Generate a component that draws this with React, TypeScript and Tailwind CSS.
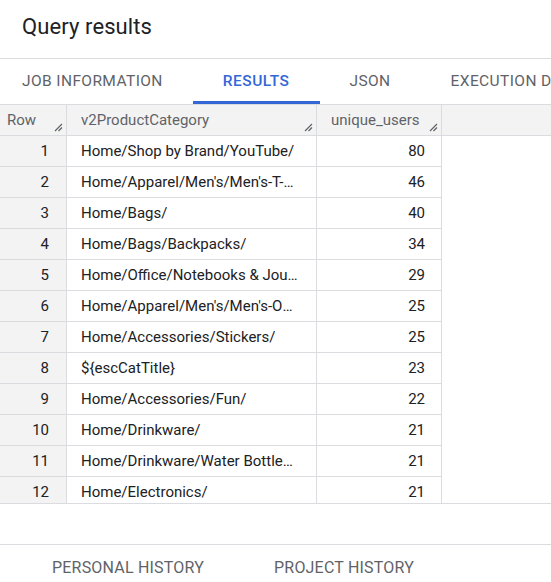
import React from "react";

const rows: [number, string, number][] = [
  [1, "Home/Shop by Brand/YouTube/", 80],
  [2, "Home/Apparel/Men's/Men's-T-Shirts/", 46],
  [3, "Home/Bags/", 40],
  [4, "Home/Bags/Backpacks/", 34],
  [5, "Home/Office/Notebooks & Journals/", 29],
  [6, "Home/Apparel/Men's/Men's-Outerwear/", 25],
  [7, "Home/Accessories/Stickers/", 25],
  [8, "${escCatTitle}", 23],
  [9, "Home/Accessories/Fun/", 22],
  [10, "Home/Drinkware/", 21],
  [11, "Home/Drinkware/Water Bottles and Tumblers/", 21],
  [12, "Home/Electronics/", 21],
];

const Grip = () => (
  <svg width="9" height="9" viewBox="0 0 9 9" className="absolute right-[3px] bottom-[3px]">
    <path d="M1 8 L8 1 M4.5 8 L8 4.5" stroke="#5f6368" strokeWidth="1.2" fill="none" />
  </svg>
);

const Tab = ({ label, active }: { label: string; active?: boolean }) => (
  <div
    className={
      "relative flex h-full shrink-0 items-center px-[30px] text-[15.5px] " +
      (active ? "font-medium tracking-[0.5px] text-[#3367d6]" : "tracking-[0.4px] text-[#5f6368]")
    }
  >
    {label}
    {active && <div className="absolute bottom-0 left-0 right-0 h-[3px] bg-[#3367d6]" />}
  </div>
);

export default function App() {
  return (
    <div
      className="flex h-[582px] w-[551px] flex-col overflow-hidden bg-white"
      style={{ fontFamily: "Roboto, 'Liberation Sans', sans-serif" }}
    >
      <div className="flex h-[58px] shrink-0 items-center px-[22px] pb-[5px] text-[22px] tracking-[0.1px] text-[#202124]">
        Query results
      </div>
      <div className="flex h-[46px] shrink-0 items-stretch whitespace-nowrap border-t border-[#dadce0]">
        <div className="-ml-[8px] flex h-full">
          <Tab label="JOB INFORMATION" />
          <Tab label="RESULTS" active />
          <Tab label="JSON" />
          <Tab label="EXECUTION DETAILS" />
        </div>
      </div>
      <div className="h-[400px] shrink-0 overflow-hidden border-b border-[#dadce0] text-[15px]">
        <div className="flex h-[32px] border-y border-[#dadce0] bg-[#f3f3f3] text-[#5f6368]">
          <div className="relative flex w-[67px] shrink-0 items-center border-r border-[#dadce0] pl-[7px]">
            Row
            <Grip />
          </div>
          <div className="relative flex w-[250px] shrink-0 items-center border-r border-[#dadce0] pl-[14px]">
            v2ProductCategory
            <Grip />
          </div>
          <div className="relative flex w-[125px] shrink-0 items-center border-r border-[#dadce0] pl-[14px]">
            unique_users
            <Grip />
          </div>
          <div className="flex-1" />
        </div>
        {rows.map(([n, cat, users]) => (
          <div key={n} className="flex h-[31px]">
            <div className="flex w-[67px] shrink-0 items-center justify-end border-r border-b border-[#dadce0] bg-[#f3f3f3] pr-[17px] text-[#202124]">
              {n}
            </div>
            <div className="flex w-[250px] shrink-0 items-center border-r border-b border-[#dadce0] pl-[14px] pr-[16px] text-[#202124]">
              <span className="truncate">{cat}</span>
            </div>
            <div className="flex w-[125px] shrink-0 items-center justify-end border-r border-b border-[#dadce0] pr-[16px] text-[#202124]">
              {users}
            </div>
            <div className="flex-1" />
          </div>
        ))}
      </div>
      <div className="mt-[40px] flex h-[46px] shrink-0 items-center border-t border-[#dadce0] text-[16px] tracking-[0.2px] text-[#5f6368]">
        <div className="pl-[52px]">PERSONAL HISTORY</div>
        <div className="pl-[70px]">PROJECT HISTORY</div>
      </div>
    </div>
  );
}
